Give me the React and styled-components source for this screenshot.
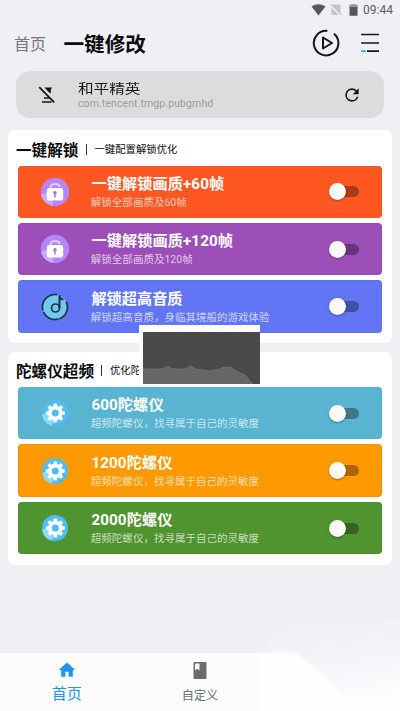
import React from "react";
import styled, { createGlobalStyle } from "styled-components";

const Global = createGlobalStyle`
  * { box-sizing: border-box; }
  body { margin: 0; background: #efeff4; font-family: Roboto, "Noto Sans CJK SC", sans-serif; overflow: hidden; }
  svg { display: block; flex: none; }
`;

const Screen = styled.div`
  position: relative;
  width: 400px;
  height: 711px;
  overflow: hidden;
  display: flex;
  flex-direction: column;
  background: #efeff4;
`;

const StatusBar = styled.div`
  height: 20px;
  padding: 0 7px 0 0;
  display: flex;
  align-items: center;
  justify-content: flex-end;
  color: #5c5c60;
`;

const Clock = styled.span`
  width: 30px;
  margin-left: 5px;
  font-size: 12px;
  line-height: 18px;
  white-space: nowrap;
`;

const Header = styled.header`
  height: 51px;
  padding: 0 20px 1px 14px;
  display: flex;
  align-items: center;
`;

const Crumb = styled.span`
  width: 49.5px;
  font-size: 16px;
  line-height: 24px;
  color: #77777b;
`;

const Heading = styled.h1`
  margin: 0;
  flex: 1;
  font-size: 20.6px;
  line-height: 26px;
  font-weight: 700;
  color: #0c0c0e;
`;

const HeaderIcons = styled.div`
  display: flex;
  align-items: center;
  gap: 20px;
  padding-bottom: 4px;
`;

const AppPill = styled.section`
  height: 47px;
  margin: 0 16px;
  padding: 0 22px;
  border-radius: 14px;
  display: flex;
  align-items: center;
  background: #dcdcdd;
`;

const AppInfo = styled.div`
  flex: 1;
  height: 47px;
  padding: 10px 0 0 22px;
`;

const AppName = styled.div`
  height: 16px;
  font-size: 15.6px;
  line-height: 17px;
  transform: scaleY(0.82);
  color: #161618;
`;

const PackageName = styled.div`
  font-size: 10.5px;
  line-height: 13px;
  letter-spacing: 0.1px;
  color: #9b9b9d;
`;

const Card = styled.section`
  height: 213px;
  margin: ${(p) => p.$top}px 8px 0;
  padding: 0 10px;
  border-radius: 7px;
  background: #fff;
  display: flex;
  flex-direction: column;
`;

const CardHead = styled.div`
  height: 35.5px;
  margin-left: -2px;
  padding-top: 6px;
  display: flex;
  align-items: center;
  white-space: nowrap;
  color: #0c0c0e;
`;

const CardTitle = styled.h2`
  margin: 0;
  font-size: 15.6px;
  line-height: 22px;
  font-weight: 700;
`;

const Divider = styled.i`
  width: 1px;
  height: 11px;
  margin: 0 7.5px 3px 7.5px;
  background: #333;
`;

const CardNote = styled.span`
  font-size: 10.4px;
  line-height: 16px;
  padding-bottom: 2px;
`;

const Rows = styled.div`
  display: flex;
  flex-direction: column;
  gap: 5.3px;
`;

const Row = styled.div`
  height: 52.2px;
  border-radius: 4px;
  padding: 0 23px 0 22px;
  display: flex;
  align-items: center;
  background: ${(p) => p.$color};
  box-shadow: inset 0 0 0 1px rgba(60, 60, 100, 0.07);
`;

const RowText = styled.div`
  flex: 1;
  height: 52px;
  padding: 8px 0 0 21.4px;
  white-space: nowrap;
`;

const RowTitle = styled.div`
  font-size: 15.2px;
  line-height: 21px;
  font-weight: 700;
  letter-spacing: ${(p) => p.$spacing || 0}px;
  color: #fff;
`;

const RowNote = styled.div`
  font-size: 10.5px;
  line-height: 16px;
  margin-left: -0.6px;
  letter-spacing: 0.02px;
  color: rgba(255, 255, 255, 0.7);
`;

const Track = styled.span`
  display: flex;
  align-items: center;
  width: 23px;
  height: 11px;
  margin-left: 7px;
  border-radius: 6px;
  background: rgba(0, 0, 0, 0.33);
`;

const Knob = styled.span`
  flex: none;
  width: 17px;
  height: 17px;
  margin-left: -7px;
  border-radius: 50%;
  background: #fafafa;
  box-shadow: 0 1px 2px rgba(0, 0, 0, 0.35);
`;

const NavBar = styled.nav`
  margin-top: auto;
  height: 58px;
  display: grid;
  grid-template-columns: repeat(3, 133.33px);
  background: #fcfcfc;
`;

const NavItem = styled.div`
  display: flex;
  flex-direction: column;
  align-items: center;
  padding-top: 8px;
  font-size: ${(p) => (p.$active ? 15 : 12.2)}px;
  line-height: 20px;
  color: ${(p) => (p.$active ? "#2094ee" : "#6f6f6f")};
  svg { margin-top: ${(p) => (p.$active ? -1 : 0)}px; }
  span { margin-top: ${(p) => (p.$active ? 3.5 : 5)}px; }
`;

const Haze = styled.svg`
  position: absolute;
  right: 0;
  bottom: 0;
`;

const FloatingChart = styled.div`
  position: absolute;
  left: 139px;
  top: 325px;
  width: 121px;
  height: 59px;
  padding: 7px 0 0 4px;
  background: #fff;
`;

function LockIcon() {
  return (
    <svg width="30" height="30" viewBox="0 0 30 30">
      <circle cx="15" cy="15" r="14.2" fill="#b486f8" />
      <path d="M1 18a7 7 0 0 1 12 6v5A14.4 14.4 0 0 1 1 18Z" fill="#caa9fb" />
      <path d="M10.5 12V10.5Q10.5 7 15 7Q19.5 7 19.5 10" fill="none" stroke="#e0ccff" strokeWidth="2" />
      <rect x="6.8" y="11" width="16.4" height="12.5" rx="2.6" fill="#fff" />
      <circle cx="15" cy="15.8" r="1.8" fill="#a078e8" />
      <path d="M15 16v4" stroke="#a078e8" strokeWidth="1.5" strokeLinecap="round" />
    </svg>
  );
}

function MusicIcon() {
  return (
    <svg width="30" height="30" viewBox="0 0 30 30" fill="none">
      <circle cx="15" cy="15" r="12.2" fill="#73c9e8" />
      <path d="M17 2.7A12.5 12.5 0 1 0 26.2 9.6" stroke="#1b3152" strokeWidth="1.7" strokeDasharray="25 1.5 18 1 100" />
      <circle cx="15.5" cy="16" r="4" stroke="#1b3152" strokeWidth="1.7" />
      <path d="M19.5 16V3.2q0 4 4 4.3" stroke="#1b3152" strokeWidth="2" />
    </svg>
  );
}

function GearIcon() {
  const teeth = [0, 45, 90, 135, 180, 225, 270, 315];
  return (
    <svg width="30" height="30" viewBox="0 0 30 30">
      <circle cx="15" cy="15" r="13" fill="#4dbdf3" />
      <path d="M2.2 17a7 7 0 0 1 11 6q0 3-2 4.4A13 13 0 0 1 2.2 17Z" fill="#86ddfb" />
      <circle cx="15.3" cy="15" r="5.4" fill="none" stroke="#fff" strokeWidth="3.8" />
      {teeth.map((a) => (
        <rect key={a} x="13.5" y="5.5" width="3.6" height="4.5" rx="0.8" fill="#fff" transform={`rotate(${a} 15.3 15)`} />
      ))}
    </svg>
  );
}

const icons = { lock: LockIcon, music: MusicIcon, gear: GearIcon };

function Feature({ color, icon, title, note, spacing }) {
  const Icon = icons[icon];
  return (
    <Row $color={color}>
      <Icon />
      <RowText>
        <RowTitle $spacing={spacing}>{title}</RowTitle>
        <RowNote>{note}</RowNote>
      </RowText>
      <Track><Knob /></Track>
    </Row>
  );
}

const unlocks = [
  { color: "#ff5722", icon: "lock", title: "一键解锁画质+60帧", note: "解锁全部画质及60帧", spacing: 0.08 },
  { color: "#9c4fb8", icon: "lock", title: "一键解锁画质+120帧", note: "解锁全部画质及120帧", spacing: 0.08 },
  { color: "#6276f5", icon: "music", title: "解锁超高音质", note: "解锁超高音质，身临其境般的游戏体验" },
];

const gyros = [
  { color: "#59b4d1", icon: "gear", title: "600陀螺仪", note: "超频陀螺仪，找寻属于自己的灵敏度", spacing: 0.1 },
  { color: "#ff9900", icon: "gear", title: "1200陀螺仪", note: "超频陀螺仪，找寻属于自己的灵敏度", spacing: 0.1 },
  { color: "#4f942f", icon: "gear", title: "2000陀螺仪", note: "超频陀螺仪，找寻属于自己的灵敏度", spacing: 0.1 },
];

export default function App() {
  return (
    <Screen>
      <Global />
      <StatusBar>
        <svg width="47" height="14" viewBox="0 0 47 14">
          <path d="M0.5 3.6Q7.5-0.9 14.5 3.6L7.5 12.4Z" fill="#58585b" />
          <path d="M20.5 1.5H29.5V12H20.5Z" fill="#c5c5c9" />
          <path d="M19.5 1.8L30 12.5" stroke="#efeff4" strokeWidth="2.4" />
          <path d="M20 1.2L30.5 12" stroke="#aeaeb2" strokeWidth="1" />
          <path d="M38.5 2.1H40.5V1H44.5V2.1H46.5V12.7H38.5Z" fill="#58585b" />
          <path d="M38.5 2.1H40.5V1H44.5V2.1H46.5V4H38.5Z" fill="#9b9b9f" />
        </svg>
        <Clock>09:44</Clock>
      </StatusBar>
      <Header>
        <Crumb>首页</Crumb>
        <Heading>一键修改</Heading>
        <HeaderIcons>
          <svg width="28" height="28" viewBox="0 0 28 28" fill="none" stroke="#151518" strokeWidth="2">
            <path d="M14.6 1.8A12.3 12.3 0 1 0 22.6 5.2" strokeLinecap="round" />
            <path d="M11 8.5V19.5L20 14Z" strokeLinejoin="round" />
          </svg>
          <svg width="20" height="20" viewBox="0 0 20 20" fill="none" stroke="#151518" strokeWidth="1.7">
            <path d="M1.2 1.5H19M1.2 10H19M7 18.2H19" />
            <path d="M1 18.2H6" stroke="#35a5df" />
          </svg>
        </HeaderIcons>
      </Header>
      <AppPill>
        <svg width="18" height="18" viewBox="0 0 18 18" fill="none">
          <path d="M1.2 1.2L16.2 16.4" stroke="#151518" strokeWidth="1.7" />
          <path d="M6.5 1.6H14L12.8 3.8V7.5L10.8 6.2Z" fill="#151518" />
          <path d="M4 16H13.5M6 12H11" stroke="#151518" strokeWidth="1.6" />
        </svg>
        <AppInfo>
          <AppName>和平精英</AppName>
          <PackageName>com.tencent.tmgp.pubgmhd</PackageName>
        </AppInfo>
        <svg width="20" height="20" viewBox="0 0 24 24" fill="#151518">
          <path d="M17.65 6.35A7.96 7.96 0 0 0 12 4a8 8 0 1 0 7.73 10h-2.08A6 6 0 1 1 12 6c1.66 0 3.14.69 4.22 1.78L13 11h7V4z" />
        </svg>
      </AppPill>
      <Card $top={12}>
        <CardHead>
          <CardTitle>一键解锁</CardTitle>
          <Divider />
          <CardNote>一键配置解锁优化</CardNote>
        </CardHead>
        <Rows>{unlocks.map((f) => <Feature key={f.title} {...f} />)}</Rows>
      </Card>
      <Card $top={8.5}>
        <CardHead>
          <CardTitle>陀螺仪超频</CardTitle>
          <Divider />
          <CardNote>优化陀螺仪</CardNote>
        </CardHead>
        <Rows>{gyros.map((f) => <Feature key={f.title} {...f} />)}</Rows>
      </Card>
      <NavBar>
        <NavItem $active>
          <svg width="20" height="20" viewBox="0 0 24 24" fill="currentColor"><path d="M10 20v-6h4v6h5v-8h3L12 3 2 12h3v8z" /></svg>
          <span>首页</span>
        </NavItem>
        <NavItem>
          <svg width="20" height="20" viewBox="0 0 20 20"><rect x="3.5" y="1" width="13" height="17" rx="1" fill="#6b6b6b" /><path d="M5 2.5H9.5V9.5L7.2 7.7L5 9.5Z" fill="#f5f5f5" /></svg>
          <span>自定义</span>
        </NavItem>
      </NavBar>
      <Haze width="140" height="91" viewBox="0 0 140 91">
        <defs>
          <linearGradient id="haze" x1="0.3" y1="0" x2="0.55" y2="1">
            <stop offset="0" stopColor="#efeff4" />
            <stop offset="0.5" stopColor="#f5f4f9" />
            <stop offset="1" stopColor="#fefefe" />
          </linearGradient>
          <filter id="soft" x="-10%" y="-20%" width="120%" height="140%"><feGaussianBlur stdDeviation="1.5" /></filter>
        </defs>
        <path d="M8 0H140V91H8Z" fill="url(#haze)" />
        <path d="M-1 33H8Q25 30 35 33Q55 46 68 59Q80 72 98 95H-1Z" fill="#fefefe" filter="url(#soft)" />
      </Haze>
      <FloatingChart>
        <svg width="117" height="52" viewBox="0 0 117 52">
          <rect width="117" height="52" fill="#4a4a4a" />
          <path d="M0 36L3 37H17L21 36L25 34.5L30 37H42L48 34L53 37L60 38L67 39L76 37L80 35.5L88 35L93 39L102 43L107 49L110 52H0Z" fill="#666" />
          <path d="M0 36L3 37H17L21 36L25 34.5L30 37H42L48 34L53 37L60 38L67 39L76 37L80 35.5L88 35L93 39L102 43L107 49L110 52" fill="none" stroke="#777" strokeWidth="0.7" />
        </svg>
      </FloatingChart>
    </Screen>
  );
}
